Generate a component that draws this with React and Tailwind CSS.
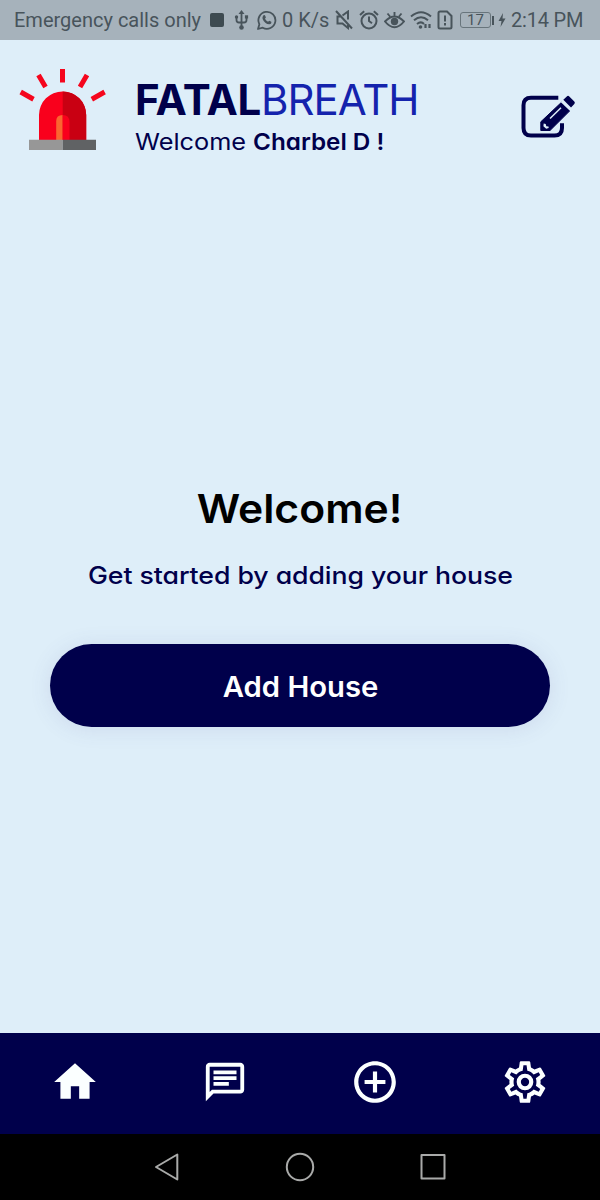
import React from "react";

const inter = "font-['Inter','Liberation_Sans',sans-serif] [font-feature-settings:'cv11'] whitespace-nowrap";
const cog =
  "M12,8A4,4 0 0,1 16,12A4,4 0 0,1 12,16A4,4 0 0,1 8,12A4,4 0 0,1 12,8M12,10A2,2 0 0,0 10,12A2,2 0 0,0 12,14A2,2 0 0,0 14,12A2,2 0 0,0 12,10M10,22C9.75,22 9.54,21.82 9.5,21.58L9.13,18.93C8.5,18.68 7.96,18.34 7.44,17.94L4.95,18.95C4.73,19.03 4.46,18.95 4.34,18.73L2.34,15.27C2.21,15.05 2.27,14.78 2.46,14.63L4.57,12.97L4.5,12L4.57,11L2.46,9.37C2.27,9.22 2.21,8.95 2.34,8.73L4.34,5.27C4.46,5.05 4.73,4.96 4.95,5.05L7.44,6.05C7.96,5.66 8.5,5.32 9.13,5.07L9.5,2.42C9.54,2.18 9.75,2 10,2H14C14.25,2 14.46,2.18 14.5,2.42L14.87,5.07C15.5,5.32 16.04,5.66 16.56,6.05L19.05,5.05C19.27,4.96 19.54,5.05 19.66,5.27L21.66,8.73C21.79,8.95 21.73,9.22 21.54,9.37L19.43,11L19.5,12L19.43,13L21.54,14.63C21.73,14.78 21.79,15.05 21.66,15.27L19.66,18.73C19.54,18.95 19.27,19.04 19.05,18.95L16.56,17.95C16.04,18.34 15.5,18.68 14.87,18.93L14.5,21.58C14.46,21.82 14.25,22 14,22H10M11.25,4L10.88,6.61C9.68,6.86 8.62,7.5 7.85,8.39L5.44,7.35L4.69,8.65L6.8,10.2C6.4,11.37 6.4,12.64 6.8,13.8L4.68,15.36L5.43,16.66L7.86,15.62C8.63,16.5 9.68,17.14 10.87,17.38L11.24,20H12.76L13.13,17.39C14.32,17.14 15.37,16.5 16.14,15.62L18.57,16.66L19.32,15.36L17.2,13.81C17.6,12.64 17.6,11.37 17.2,10.2L19.31,8.65L18.56,7.35L16.15,8.39C15.38,7.5 14.32,6.86 13.12,6.62L12.75,4H11.25Z";

function StatusBar() {
  return (
    <div className="flex h-10 items-center bg-[#a6b2bb] pl-[14px] font-['Roboto','Liberation_Sans',sans-serif] text-[20px] leading-none text-[#48545b] whitespace-nowrap">
      <span className="w-[196px] shrink-0">Emergency calls only</span>
      <span className="h-[14px] w-[14px] shrink-0 rounded-[2px] bg-[#3d4a50]" />
      <svg className="ml-[10px] shrink-0" width="15" height="20" viewBox="0 0 15 20" fill="none" stroke="currentColor" strokeWidth="1.8">
        <path d="M7.5 3v14M2.5 7.500v2.500q0 2.500 2.500 2.500h5q2.500 0 2.500-2.500V7.500" />
        <path d="M7.500 0l3 4h-6z" fill="currentColor" stroke="none" />
        <circle cx="7.500" cy="17.500" r="2.300" fill="currentColor" stroke="none" />
        <circle cx="2.500" cy="7" r="1.700" fill="currentColor" stroke="none" />
        <path d="M10.900 5.300h3.200v3.200h-3.200z" fill="currentColor" stroke="none" />
      </svg>
      <svg className="ml-[8px] shrink-0" width="20" height="20" viewBox="0 0 20 20" fill="none" stroke="currentColor" strokeWidth="1.8">
        <path d="M1 19l1.400-4.700A8.500 8.500 0 1 1 5.700 17.700z" strokeLinejoin="round" />
        <path d="M6.200 5.500q1.600-1 2.100.4l.6 1.600-.9 1.300q1 2 3 3l1.300-1 2 1q.5 2.200-2 2.500-4.600-.2-6.700-5.300-.5-2 .6-3.500z" fill="currentColor" stroke="none" />
      </svg>
      <span className="ml-[5px] w-[53px] shrink-0">0 K/s</span>
      <svg className="shrink-0" width="19" height="20" viewBox="0 0 19 20" fill="none" stroke="currentColor" strokeWidth="2">
        <path d="M1 1l16 17.500M7.500 5.500L13 1.500v8M13 15v3l-5.500-4.500H2.500v-7h3" />
      </svg>
      <svg className="ml-[5px] shrink-0" width="20" height="20" viewBox="0 0 20 20" fill="none" stroke="currentColor" strokeWidth="2">
        <circle cx="10" cy="11" r="7.500" />
        <path d="M10 6.500V11l3 2.200M1 5l4.200-3.700M19 5l-4.200-3.700" />
      </svg>
      <svg className="ml-[5px] shrink-0" width="21" height="20" viewBox="0 0 21 20" fill="none" stroke="currentColor" strokeWidth="1.900">
        <path d="M1 11.500q9.500-10 19 0-9.500 11.500-19 0zM10.500 2v4M3.500 3.500l2.500 3M17.500 3.500l-2.500 3" />
        <circle cx="10.500" cy="11.500" r="3.700" fill="currentColor" stroke="none" />
      </svg>
      <svg className="ml-[5px] shrink-0" width="22" height="20" viewBox="0 0 22 20" fill="none" stroke="currentColor" strokeWidth="2">
        <path d="M1 6.500q10-8.500 20 0M4 10.300q7-6 14 0M7 14q4-3.300 7 0" />
        <circle cx="10.500" cy="17" r="1.800" fill="currentColor" stroke="none" />
        <path d="M15.500 14v4M19.500 14v4" strokeWidth="2.200" />
      </svg>
      <svg className="ml-[5px] shrink-0" width="16" height="20" viewBox="0 0 16 20" fill="none" stroke="currentColor" strokeWidth="2">
        <path d="M3 1.500h7l4.500 4.500v11q0 1.500-1.500 1.500H3q-1.500 0-1.500-1.500V3q0-1.500 1.500-1.500z" />
        <path d="M8 5.500v6M8 13v2.500" />
      </svg>
      <span className="ml-[7px] flex h-4 w-[31px] shrink-0 items-center justify-center rounded-[3px] border border-[#68757c] text-[15px]">17</span>
      <span className="ml-px h-[9px] w-[2px] shrink-0 bg-[#48545b]" />
      <svg className="ml-[4px] shrink-0" width="8" height="16" viewBox="0 0 8 16" fill="currentColor">
        <path d="M5 1L.5 9H3.500L2.500 15 7.500 6.500H4.500z" />
      </svg>
      <span className="ml-[5px] tracking-[-0.2px]">2:14 PM</span>
    </div>
  );
}

function Siren() {
  return (
    <svg className="shrink-0" width="90" height="86" viewBox="18 66 90 86">
      <g stroke="#f5061d" strokeWidth="5">
        <path d="M62.500 69v13.500M38.500 75l7 12M87 75l-7 12M20.700 92l12.800 7.200M104.600 92l-12.800 7.200" />
      </g>
      <path d="M39 140v-25a23.600 23.600 0 0 1 47.200 0v25z" fill="#f9001c" />
      <path d="M62.700 91.400a23.600 23.600 0 0 1 23.500 23.600v25H62.700z" fill="#c90012" />
      <path d="M56.200 140v-19q0-6 6.500-6v25z" fill="#fa6630" />
      <path d="M62.700 115q6.800 0 6.800 7v18h-6.800z" fill="#f9001c" />
      <path d="M29 139.700h33.700V150H29z" fill="#979797" />
      <path d="M62.700 139.700H96V150H62.700z" fill="#606264" />
    </svg>
  );
}

function Header() {
  return (
    <header className="flex h-[126px] items-start pl-[18px] pr-[22px] pt-[26px]">
      <Siren />
      <div className="ml-[27px] flex flex-col pt-[8px] text-[#00004b]">
        <h1 className={`${inter} flex text-[42px] leading-[52px]`}>
          <span className="w-[126px] font-bold tracking-[-0.4px]">FATAL</span>
          <span className="tracking-[-1px] text-[#1423ad]">BREATH</span>
        </h1>
        <p className={`${inter} mt-px flex text-[23px] leading-[30px]`}>
          <span className="w-[118px] origin-left scale-x-[1.1]">Welcome </span>
          <span className="origin-left scale-x-[1.055] font-semibold">Charbel D !</span>
        </p>
      </div>
      <svg className="ml-auto mt-[26px] shrink-0" width="58" height="48" viewBox="520 92 58 48" fill="none">
        <path d="M558.300 97.700H531q-7.500 0-7.500 7.500V128q0 7.500 7.500 7.500h23.500q7.500 0 7.500-7.500v-4.700" stroke="#00004b" strokeWidth="4" />
        <path d="M540.800 130.500v-8.700l20.700-19.500 8.500 8.300L550 130.500z" fill="#00004b" stroke="#00004b" strokeLinejoin="round" />
        <path d="M561.500 101.500l9.500 9" stroke="#deeef9" strokeWidth="1.800" />
        <path d="M563.300 99.700l3.500-3.300q1.200-1.200 2.500 0l5 5q1.200 1.200 0 2.500l-3.300 3.500z" fill="#00004b" />
        <path d="M550 118.500l11-10.800" stroke="#deeef9" strokeWidth="1.500" />
        <path d="M543.700 123.500l2 .5.600 2.200 2.200.4.200 1.400-2.500.8-2.800-2.500z" fill="#deeef9" />
      </svg>
    </header>
  );
}

function Tab({ d, size = "h-[50px] w-[50px]" }) {
  return (
    <div className="flex flex-1 items-center justify-center">
      <svg className={size} viewBox="0 0 24 24" fill="#fbffff">
        <path d={d} />
      </svg>
    </div>
  );
}

export default function App() {
  return (
    <div className="flex h-[1200px] w-[600px] flex-col overflow-hidden bg-[#deeef9]">
      <StatusBar />
      <Header />
      <main className="flex flex-1 flex-col items-center pt-[318px]">
        <h2 className={`${inter} scale-x-[1.065] text-[40px] font-semibold leading-[50px] text-black`}>Welcome!</h2>
        <p className={`${inter} mt-[26px] scale-x-[1.11] text-[24px] font-[450] leading-[32px] tracking-[-0.05px] text-[#00004b]`}>Get started by adding your house</p>
        <button className={`${inter} mt-[52px] h-[83px] w-[500px] rounded-full bg-[#00004b] pt-[3px] text-[28px] font-semibold text-white shadow-[0_2px_22px_rgba(80,80,150,0.12)]`}>
          <span className="inline-block scale-x-[1.045]">Add House</span>
        </button>
      </main>
      <nav className="flex h-[101px] bg-[#00004b] pb-[4px]">
        <Tab d="M10 20v-6h4v6h5v-8h3L12 3 2 12h3v8z" />
        <Tab size="h-[46px] w-[46px]" d="M4 4h16v12H5.170L4 17.170V4m0-2c-1.100 0-1.990.9-1.990 2L2 22l4-4h14c1.100 0 2-.9 2-2V4c0-1.100-.9-2-2-2H4zm2 10h8v2H6v-2zm0-3h12v2H6V9zm0-3h12v2H6V6z" />
        <Tab d="M13 7h-2v4H7v2h4v4h2v-4h4v-2h-4V7zm-1-5C6.480 2 2 6.480 2 12s4.480 10 10 10 10-4.480 10-10S17.520 2 12 2zm0 18c-4.410 0-8-3.590-8-8s3.590-8 8-8 8 3.590 8 8-3.590 8-8 8z" />
        <Tab d={cog} />
      </nav>
      <div className="flex h-[66px] items-center justify-center bg-black">
        {["M25.300 2.500v25L4 15z", "M15 1.800a13.200 13.200 0 1 0 0 26.400a13.200 13.200 0 1 0 0-26.400z", "M3.500 3h23v23.500h-23z"].map((d) => (
          <div key={d} className="flex w-[133px] justify-center">
            <svg width="30" height="30" viewBox="0 0 30 30" fill="none" stroke="#a9aaa9" strokeWidth="2" strokeLinejoin="round">
              <path d={d} />
            </svg>
          </div>
        ))}
      </div>
    </div>
  );
}
